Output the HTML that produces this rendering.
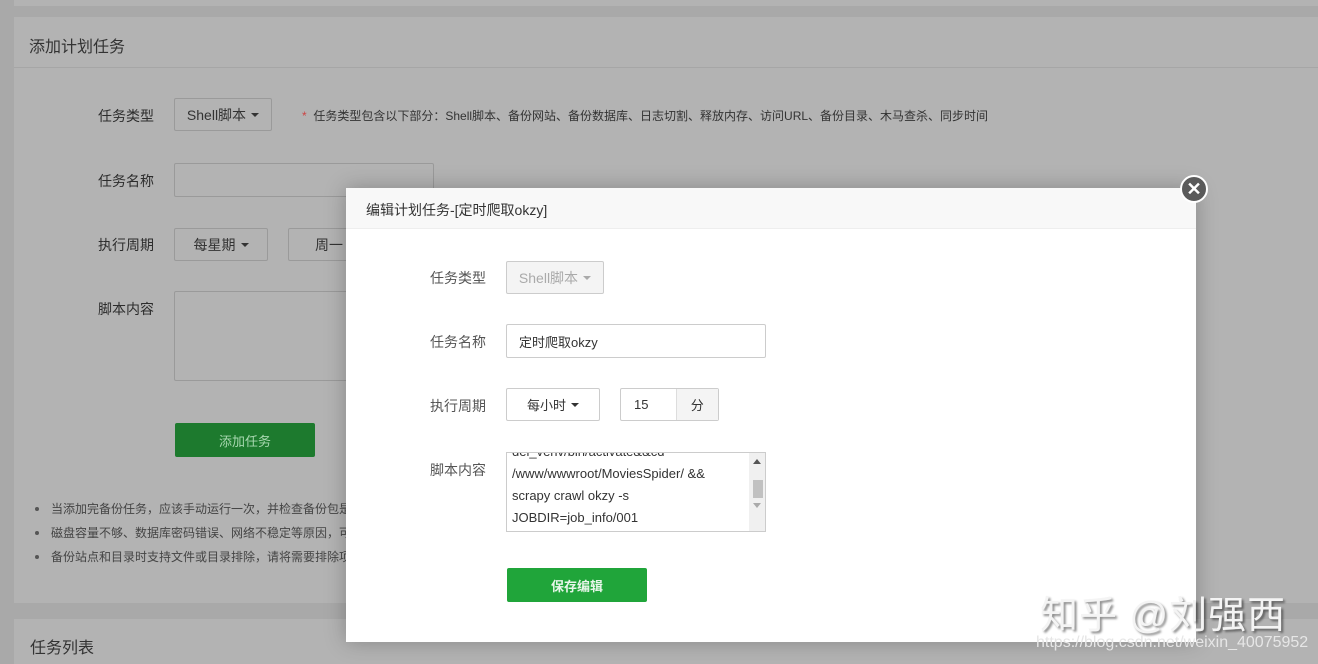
<!DOCTYPE html>
<html><head><meta charset="utf-8"><style>
*{box-sizing:border-box;margin:0;padding:0}
body{width:1318px;height:664px;overflow:hidden;background:#a9a9a9;font-family:"Liberation Sans","Noto Sans CJK SC",sans-serif;position:relative;color:#333}
.a{position:absolute}
.panel{background:#b3b3b3}
.lbl{font-size:14px;color:#2c2c2c}
.box{border:1px solid #9a9a9a;border-radius:2px;background:#b3b3b3;font-size:14px;color:#333;display:flex;align-items:center;justify-content:center}
.caret{display:inline-block;border-left:4px solid transparent;border-right:4px solid transparent;border-top:4px solid #333;margin-left:5px;vertical-align:middle}
.m .lbl{color:#555}
.mb{border:1px solid #ccc;border-radius:2px;background:#fff;font-size:13px;color:#555;display:flex;align-items:center;justify-content:center}
li{list-style:none;font-size:12px;color:#444;height:24px;line-height:24px;position:relative}
li:before{content:"";position:absolute;left:-16px;top:10px;width:4px;height:4px;border-radius:50%;background:#555}
</style></head><body>
<div class="a panel" style="left:14px;top:0;width:1304px;height:6px"></div>
<div class="a panel" style="left:14px;top:17px;width:1304px;height:586px"></div>
<div class="a" style="left:14px;top:67px;width:1304px;height:1px;background:#a6a6a6"></div>
<div class="a" style="left:29px;top:33px;font-size:16px;color:#333">添加计划任务</div>
<div class="a lbl" style="left:98px;top:106px">任务类型</div>
<div class="a box" style="left:174px;top:98px;width:98px;height:33px">Shell脚本<span class="caret"></span></div>
<div class="a" style="left:302px;top:107px;font-size:12px;color:#333"><span style="color:#c44">*</span>&nbsp; 任务类型包含以下部分：Shell脚本、备份网站、备份数据库、日志切割、释放内存、访问URL、备份目录、木马查杀、同步时间</div>
<div class="a lbl" style="left:98px;top:171px">任务名称</div>
<div class="a box" style="left:174px;top:163px;width:260px;height:34px"></div>
<div class="a lbl" style="left:98px;top:235px">执行周期</div>
<div class="a box" style="left:174px;top:228px;width:94px;height:33px">每星期<span class="caret"></span></div>
<div class="a box" style="left:288px;top:228px;width:90px;height:33px;justify-content:flex-start;padding-left:26px">周一</div>
<div class="a lbl" style="left:98px;top:299px">脚本内容</div>
<div class="a box" style="left:174px;top:291px;width:200px;height:90px"></div>
<div class="a" style="left:175px;top:423px;width:140px;height:34px;background:#1d7a2e;border-radius:2px;color:#a8d8b0;font-size:13px;display:flex;align-items:center;justify-content:center">添加任务</div>
<ul class="a" style="left:31px;top:497px;width:320px;padding-left:20px;white-space:nowrap;overflow:hidden">
<li>当添加完备份任务，应该手动运行一次，并检查备份包是否完整</li>
<li>磁盘容量不够、数据库密码错误、网络不稳定等原因，可能导致</li>
<li>备份站点和目录时支持文件或目录排除，请将需要排除项</li>
</ul>
<div class="a panel" style="left:14px;top:619px;width:1304px;height:45px"></div>
<div class="a" style="left:30px;top:634px;font-size:16px;color:#333">任务列表</div>

<div class="a m" style="left:346px;top:188px;width:850px;height:454px;background:#fff;box-shadow:0 0 20px rgba(0,0,0,.25)">
<div class="a" style="left:0;top:0;width:850px;height:41px;background:#f8f8f8;border-bottom:1px solid #eee"></div>
<div class="a" style="left:20px;top:12px;font-size:14px;color:#333">编辑计划任务-[定时爬取okzy]</div>
<div class="a lbl" style="left:84px;top:80px">任务类型</div>
<div class="a mb" style="left:160px;top:73px;width:98px;height:33px;background:#f4f4f4;color:#aaa;font-size:14px">Shell脚本<span class="caret" style="border-top-color:#aaa"></span></div>
<div class="a lbl" style="left:84px;top:144px">任务名称</div>
<div class="a mb" style="left:160px;top:136px;width:260px;height:34px;justify-content:flex-start;padding-left:12px;color:#333">定时爬取okzy</div>
<div class="a lbl" style="left:84px;top:208px">执行周期</div>
<div class="a mb" style="left:160px;top:200px;width:94px;height:33px;color:#333">每小时<span class="caret"></span></div>
<div class="a mb" style="left:274px;top:200px;width:99px;height:33px;justify-content:flex-start;color:#333"><span style="width:55px;padding-left:13px">15</span><span style="width:43px;height:31px;background:#f4f4f4;border-left:1px solid #ddd;display:flex;align-items:center;justify-content:center">分</span></div>
<div class="a lbl" style="left:84px;top:272px">脚本内容</div>
<div class="a" style="left:160px;top:264px;width:260px;height:80px;border:1px solid #ccc;overflow:hidden;font-size:13px;color:#333;line-height:22px">
<div style="position:absolute;left:5px;top:-12px;white-space:nowrap">del_venv/bin/activate&amp;&amp;cd<br>/www/wwwroot/MoviesSpider/ &amp;&amp;<br>scrapy crawl okzy -s<br>JOBDIR=job_info/001</div>
<div style="position:absolute;right:0;top:0;width:16px;height:78px;background:#f0f0f0"><div style="position:absolute;left:4px;top:27px;width:10px;height:18px;background:#c1c1c1"></div><div style="position:absolute;left:4px;top:6px;border-left:4px solid transparent;border-right:4px solid transparent;border-bottom:5px solid #555"></div><div style="position:absolute;left:4px;top:50px;border-left:4px solid transparent;border-right:4px solid transparent;border-top:5px solid #aaa"></div></div>
</div>
<div class="a" style="left:161px;top:380px;width:140px;height:34px;background:#20a53a;border-radius:2px;color:#e8f6ea;font-size:13px;font-weight:bold;display:flex;align-items:center;justify-content:center">保存编辑</div>
</div>
<div class="a" style="left:1180px;top:175px;width:28px;height:28px;border-radius:50%;background:#5a5a5a;border:2px solid #fff;color:#fff;font-size:18px;font-weight:bold;display:flex;align-items:center;justify-content:center;line-height:1">✕</div>
<div class="a" style="left:1040px;top:584px;font-size:38px;color:#f4f4f4;text-shadow:2px 2px 2px rgba(0,0,0,.45);white-space:nowrap;letter-spacing:1px">知乎 @刘强西</div>
<div class="a" style="left:1036px;top:634px;font-size:16px;color:#e6e6e6;white-space:nowrap">https://blog.csdn.net/weixin_40075952</div>
</body></html>
